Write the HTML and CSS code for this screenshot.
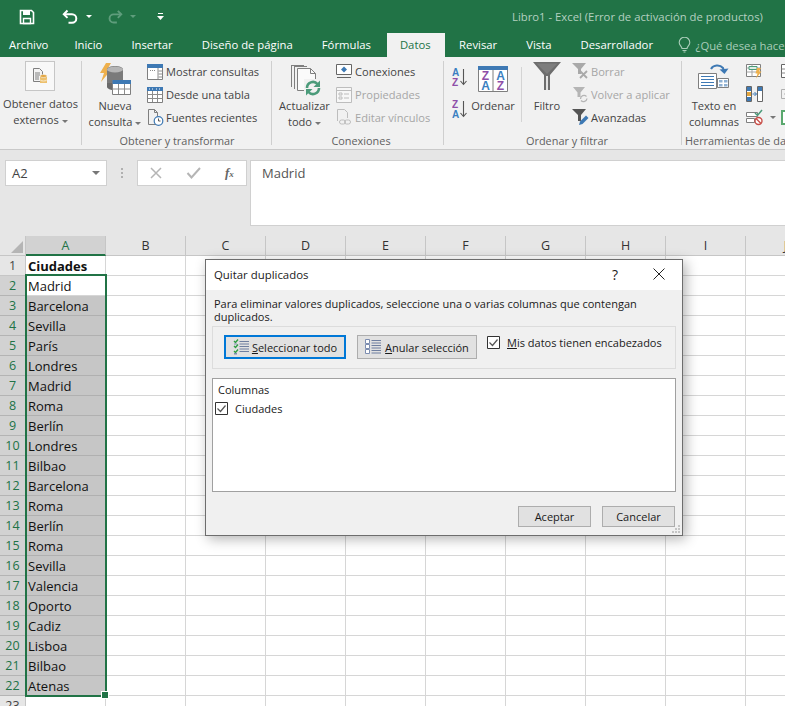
FILE: index.html
```html
<!DOCTYPE html>
<html lang="es">
<head>
<meta charset="utf-8">
<title>Libro1 - Excel</title>
<link rel="stylesheet" href="styles.css">
</head>
<body>
<div class="app">
  <header class="titlebar">
    <div class="qat">
      <svg class="qat-save" width="16" height="16" viewBox="0 0 16 16"><path d="M1.500 1.500h11l2 2v11h-13z" fill="none" stroke="#fff" stroke-width="1.600"/><path d="M4 1.500h7v4.500H4z" fill="#fff"/><path d="M4.500 9.500h7v5h-7z" fill="none" stroke="#fff" stroke-width="1.400"/></svg>
      <svg class="qat-undo" width="17" height="16" viewBox="0 0 17 16"><path d="M5.500 1.500L1.800 5.200l3.700 3.700" fill="none" stroke="#fff" stroke-width="2"/><path d="M2 5.200h8a4.300 4.300 0 0 1 0 8.600H6.500" fill="none" stroke="#fff" stroke-width="2"/></svg>
      <span class="qat-caret"></span>
      <svg class="qat-redo" width="16" height="16" viewBox="0 0 17 16"><path d="M11.500 1.500l3.700 3.700-3.700 3.700" fill="none" stroke="#5f9d7c" stroke-width="2"/><path d="M15 5.200H7a4.300 4.300 0 0 0 0 8.600h3.500" fill="none" stroke="#5f9d7c" stroke-width="2"/></svg>
      <span class="qat-caret dim"></span>
      <svg class="qat-more" width="7" height="8" viewBox="0 0 7 8"><path d="M1 .5h5" stroke="#fff"/><path d="M0 3h7L3.500 7z" fill="#fff"/></svg>
    </div>
    <div class="doc-title">Libro1 - Excel (Error de activación de productos)</div>
  </header>

  <nav class="tabs">
    <span class="tab tab-file">Archivo</span>
    <span class="tab">Inicio</span>
    <span class="tab">Insertar</span>
    <span class="tab">Diseño de página</span>
    <span class="tab">Fórmulas</span>
    <span class="tab tab-active">Datos</span>
    <span class="tab">Revisar</span>
    <span class="tab">Vista</span>
    <span class="tab">Desarrollador</span>
    <span class="tell">
      <svg width="13" height="16" viewBox="0 0 13 16"><path d="M4 11.500c0-2-2.800-3-2.800-6a5.300 5.300 0 0 1 10.600 0c0 3-2.800 4-2.800 6zM4.500 13.500h4M5.500 15h2" fill="none" stroke="#a9cdb9" stroke-width="1.100"/></svg>
      ¿Qué desea hacer?
    </span>
  </nav>

  <section class="ribbon">
    <div class="group g1">
      <div class="group-body">
        <div class="large ext">
          <div class="ext-box">
            <svg width="16" height="16" viewBox="0 0 16 16"><path d="M1.500.5h6l3 3v10h-9z" fill="#f4f4f4" stroke="#7f7f7f"/><path d="M3 5h5M3 7h5M3 9h4M3 11h4" stroke="#7f7f7f"/><path d="M8 8h7v7H8z" fill="#edc06d"/><ellipse cx="11.500" cy="8" rx="3.500" ry="1.500" fill="#e3a53e" stroke="#f4f4f4" stroke-width=".6"/><path d="M8 11.500a3.500 1.500 0 0 0 7 0" fill="none" stroke="#f8e9c9"/></svg>
          </div>
          <div class="lbl">Obtener datos</div>
          <div class="lbl">externos<i class="caret"></i></div>
        </div>
      </div>
    </div>

    <div class="group g2">
      <div class="group-body">
        <div class="large w54">
          <svg class="big" width="34" height="34" viewBox="0 0 34 34"><path d="M8 1h5L9 8h4L3 20l3-9H2z" fill="#eeb04c"/><path d="M9 7.500c0-2.200 3.500-3.500 8-3.500s8 1.300 8 3.500V24H9z" fill="#7a7a7a"/><ellipse cx="17" cy="7.500" rx="8" ry="3" fill="#b5b5b5"/><path d="M9 21v4c0 1.500 3 3 6 3v-7z" fill="#6a6a6a"/><path d="M14.500 18.500h18v14h-18z" fill="#fff" stroke="#7f7f7f"/><path d="M14.500 18h18.500v4H14.500z" fill="#3e79b4"/><path d="M14.500 27h18M20.500 22v10M26.500 22v10" stroke="#8c8c8c"/></svg>
          <div class="lbl">Nueva</div>
          <div class="lbl">consulta<i class="caret"></i></div>
        </div>
        <div class="stack">
          <div class="row"><svg width="17" height="17" viewBox="0 0 17 17"><path d="M.5 1.500h15v15H.5z" fill="#fff" stroke="#7f7f7f"/><path d="M0 1h16v4H0z" fill="#3e79b4"/><path d="M11 5v11M11.500 8h4M11.500 11h4M11.500 14h4" stroke="#8c8c8c"/><path d="M7 7.500h1M5 7.500h1M3 7.500h1" stroke="#8c8c8c"/></svg><span>Mostrar consultas</span></div>
          <div class="row"><svg width="17" height="17" viewBox="0 0 17 17"><path d="M.5 1.500h15v15H.5z" fill="#fff" stroke="#7f7f7f"/><path d="M0 1h16v4H0z" fill="#3e79b4"/><path d="M2 3h1M5 3h1M9 3h1M12 3h1" stroke="#fff"/><path d="M.5 8.500h15M.5 12.500h15M5.500 5v11M10.500 5v11" stroke="#8c8c8c"/></svg><span>Desde una tabla</span></div>
          <div class="row"><svg width="17" height="17" viewBox="0 0 17 17"><path d="M9 15.500H1.500V.5h6l3 3v4" fill="none" stroke="#7f7f7f"/><path d="M7.500.5v3h3" fill="none" stroke="#7f7f7f"/><circle cx="11.500" cy="12" r="4.300" fill="#fff" stroke="#3e79b4" stroke-width="1.200"/><path d="M11.500 9.500V12h2" fill="none" stroke="#555"/></svg><span>Fuentes recientes</span></div>
        </div>
      </div>
      <div class="group-label">Obtener y transformar</div>
    </div>

    <div class="group g3">
      <div class="group-body">
        <div class="large w53">
          <svg class="big" width="34" height="34" viewBox="0 0 34 34"><path d="M3.500 3v22M6.500 4v23" fill="none" stroke="#7f7f7f"/><path d="M3 3.500h13M6 4.500h13" stroke="#7f7f7f"/><path d="M9.500 6.500h13l5 5v17h-18z" fill="#fafafa" stroke="#7f7f7f"/><path d="M22.500 6.500v5h5" fill="none" stroke="#7f7f7f"/><path d="M16 17h17v17H16z" fill="#f1f1f1"/><path d="M19 26a6 6 0 0 1 10.500-4" fill="none" stroke="#4b9b7a" stroke-width="2.600"/><path d="M32 18.500v6.500h-6.500z" fill="#4b9b7a"/><path d="M31 26a6 6 0 0 1-10.500 4" fill="none" stroke="#4b9b7a" stroke-width="2.600"/><path d="M18 33.500V27h6.500z" fill="#4b9b7a"/></svg>
          <div class="lbl">Actualizar</div>
          <div class="lbl">todo<i class="caret"></i></div>
        </div>
        <div class="stack">
          <div class="row"><svg width="17" height="17" viewBox="0 0 17 17"><path d="M.5 1.500h15v10H.5z" fill="#fff" stroke="#666"/><path d="M1 14.500h14" stroke="#666"/><path d="M8 3.500l3 3-3 3-3-3z" fill="#3e79b4"/></svg><span>Conexiones</span></div>
          <div class="row off"><svg width="17" height="17" viewBox="0 0 17 17"><path d="M.5 1.500h15v15H.5z" fill="#f7f7f7" stroke="#bdbdbd"/><path d="M.5 4.500h15" stroke="#bdbdbd"/><path d="M3 7h3v2H3zM3 11h3v2H3z" fill="none" stroke="#bdbdbd"/><path d="M8 8h5M8 12h5" stroke="#bdbdbd"/></svg><span>Propiedades</span></div>
          <div class="row off"><svg width="17" height="17" viewBox="0 0 17 17"><path d="M1.500 12V.5h7l3 3V9" fill="none" stroke="#bdbdbd"/><rect x="3.500" y="11" width="6" height="4" rx="2" fill="none" stroke="#bdbdbd"/><rect x="8.500" y="11" width="6" height="4" rx="2" fill="none" stroke="#bdbdbd"/></svg><span>Editar vínculos</span></div>
        </div>
      </div>
      <div class="group-label">Conexiones</div>
    </div>

    <div class="group g4">
      <div class="group-body">
        <div class="sorts">
          <svg width="16" height="22" viewBox="0 0 16 22"><text x="0" y="9" class="sl blue">A</text><text x="0" y="19" class="sl purple">Z</text><path d="M11.500 2v15M8.500 14l3 3.500 3-3.500" fill="none" stroke="#555" stroke-width="1.100"/></svg>
          <svg width="16" height="22" viewBox="0 0 16 22"><text x="0" y="9" class="sl purple">Z</text><text x="0" y="19" class="sl blue">A</text><path d="M11.500 2v15M8.500 14l3 3.500 3-3.500" fill="none" stroke="#555" stroke-width="1.100"/></svg>
        </div>
        <div class="large w46">
          <svg class="big sortbox" width="30" height="26" viewBox="0 0 30 26"><path d="M.5.500h29v25H.5z" fill="#fff" stroke="#7f7f7f"/><path d="M0 0h30v4H0z" fill="#3e79b4"/><path d="M15 4v22" stroke="#7f7f7f"/><text x="7.500" y="14" class="zl purple">Z</text><text x="22.500" y="14" class="zl blue">A</text><text x="7.500" y="24" class="zl blue">A</text><text x="22.500" y="24" class="zl purple">Z</text></svg>
          <div class="lbl">Ordenar</div>
        </div>
        <div class="vsep"></div>
        <div class="large w40">
          <svg class="big" width="28" height="28" viewBox="0 0 28 28"><path d="M0 0h28L17 13v15h-6V13z" fill="#6d6d6d"/><path d="M13 14h2v14h-2z" fill="#e2e2e2"/><path d="M3.500 1.500h21L14 12z" fill="#7d7d7d"/></svg>
          <div class="lbl">Filtro</div>
        </div>
        <div class="stack">
          <div class="row off"><svg width="17" height="17" viewBox="0 0 17 17"><path d="M0 0h14L9 6v5H6V6z" fill="#a9a9a9"/><path d="M8 8l7 7M15 8l-7 7" stroke="#a9a9a9" stroke-width="1.800"/></svg><span>Borrar</span></div>
          <div class="row off"><svg width="17" height="17" viewBox="0 0 17 17"><path d="M1 1h12L8.500 6.500V11h-3V6.500z" fill="#b5b5b5"/><path d="M8.500 13a3.500 3.500 0 0 1 6-2.500M15 12.500a3.500 3.500 0 0 1-6 2" fill="none" stroke="#b5b5b5" stroke-width="1.300"/></svg><span>Volver a aplicar</span></div>
          <div class="row"><svg width="17" height="17" viewBox="0 0 17 17"><path d="M0 0h14L9 6v6H6V6z" fill="#555"/><path d="M7 16l1-3.500 6-6 2.500 2.500-6 6z" fill="#3e79b4"/></svg><span>Avanzadas</span></div>
        </div>
      </div>
      <div class="group-label">Ordenar y filtrar</div>
    </div>

    <div class="group g5">
      <div class="group-body">
        <div class="large w56">
          <svg class="big" width="32" height="32" viewBox="0 0 32 32"><path d="M.5 11.500h18v15H.5z" fill="#fff" stroke="#7f7f7f"/><path d="M3 14.500h13M3 17.500h13M3 20.500h13M3 23.500h13" stroke="#3e79b4"/><path d="M19.500 16.500h11v9h-11z" fill="#fff" stroke="#7f7f7f"/><path d="M21 18h3.500v2.500H21zM26 18h3.500v2.500H26zM21 22h3.500v2.500H21zM26 22h3.500v2.500H26z" fill="#8fb1d3"/><path d="M13 7a7 6 0 0 1 12-1l1 3" fill="none" stroke="#3e79b4" stroke-width="2"/><path d="M21.500 7.500l5 4.500 4-5.500z" fill="#3e79b4"/></svg>
          <div class="lbl">Texto en</div>
          <div class="lbl">columnas</div>
        </div>
        <div class="stack tools">
          <div class="row"><svg width="17" height="17" viewBox="0 0 17 17"><path d="M.5 1.500h14v12H.5z" fill="#fff" stroke="#7f7f7f"/><path d="M.5 5h14M.5 9h14M6 1.500v12" stroke="#a5a5a5"/><path d="M3 3.500h8v3H3z" fill="#dfeee5" stroke="#4b9b7a"/><path d="M11 5h4l-2 3.500h2.500L10 15.500l1.500-5H9.500z" fill="#eeb04c"/></svg></div>
          <div class="row"><svg width="17" height="17" viewBox="0 0 17 17"><path d="M.5.500h5v15h-5zM11.500.500h5v15h-5z" fill="#fff" stroke="#666"/><path d="M1 1h4v4H1zM12 1h4v4h-4z" fill="#3e79b4"/><path d="M1 6h4v4H1z" fill="#e3a53e"/><path d="M1 11h4v4H1z" fill="#3e79b4"/><path d="M6.500 8h4M8.500 6l2 2-2 2" fill="none" stroke="#3e79b4"/></svg></div>
          <div class="row"><svg width="17" height="17" viewBox="0 0 17 17"><path d="M.5 3.500h11v4H.5zM.5 9.500h8v4H.5z" fill="#fff" stroke="#7f7f7f"/><path d="M9 4l2.500 2.500L16 1" fill="none" stroke="#4b9b7a" stroke-width="1.500"/><circle cx="12.500" cy="12" r="3.500" fill="#fff" stroke="#c8504a" stroke-width="1.400"/><path d="M10 9.500l5 5" stroke="#c8504a" stroke-width="1.400"/></svg><i class="caret tool-caret"></i></div>
        </div>
        <div class="stack tools2">
          <div class="row"><svg width="17" height="17" viewBox="0 0 17 17"><path d="M.5 1.500h14v13H.5z" fill="#fff" stroke="#666"/><path d="M.5 6h14M.5 10h14M6 1.500v13" stroke="#888"/></svg></div>
          <div class="row"><svg width="17" height="17" viewBox="0 0 17 17"><path d="M.5 3.500h14v9H.5z" fill="#f2f2f2" stroke="#b0b0b0"/><path d="M3 8h8" stroke="#b0b0b0"/></svg></div>
          <div class="row"><svg width="17" height="17" viewBox="0 0 17 17"><path d="M1 2h5v13H1z" fill="#fff" stroke="#5aa86e" stroke-width="2"/></svg></div>
        </div>
      </div>
      <div class="group-label">Herramientas de datos</div>
    </div>
  </section>

  <section class="fbar">
    <div class="namebox"><span>A2</span><i class="nb-caret"></i></div>
    <div class="dots"><b></b><b></b><b></b></div>
    <div class="fbtns">
      <svg width="14" height="14" viewBox="0 0 14 14"><path d="M2 2l10 10M12 2L2 12" stroke="#b5b5b5" stroke-width="1.500"/></svg>
      <svg width="15" height="14" viewBox="0 0 15 14"><path d="M1.500 7l4 4.500L14 2" fill="none" stroke="#b5b5b5" stroke-width="2"/></svg>
      <span class="fx">f<small>x</small></span>
    </div>
    <div class="finput">Madrid</div>
  </section>

  <section class="sheet">
    <div class="grid" id="grid"></div>
    <div class="selection"><i class="handle"></i></div>

    <div class="dialog">
      <div class="dlg-title">
        <span class="dlg-name">Quitar duplicados</span>
        <span class="dlg-help">?</span>
        <svg class="dlg-close" width="12" height="12" viewBox="0 0 12 12"><path d="M.5.500l11 11M11.500.500l-11 11" stroke="#222" stroke-width="1"/></svg>
      </div>
      <div class="dlg-body">
        <p class="dlg-desc">Para eliminar valores duplicados, seleccione una o varias columnas que contengan duplicados.</p>
        <div class="dlg-tools">
          <button class="btn btn-sel">
            <svg width="17" height="16" viewBox="0 0 17 16"><path d="M1 2l1.500 1.500L5 .5M1 7l1.500 1.500L5 5.500M1 12l1.500 1.500L5 10.500" fill="none" stroke="#2f9e44" stroke-width="1.400"/><path d="M6.500 2.500H16M6.500 5H16M6.500 7.500H16M6.500 10H16M6.500 12.500H16" stroke="#6f7fa0"/><path d="M1 4.500h3v1H1zM1 14h3v1.500H1z" fill="#7c8db0"/></svg>
            <span><u>S</u>eleccionar todo</span>
          </button>
          <button class="btn btn-clear">
            <svg width="17" height="16" viewBox="0 0 17 16"><path d="M.5.500h4v4h-4zM.5 5.500h4v4h-4zM.5 10.500h4v4h-4z" fill="#fff" stroke="#7c8db0"/><path d="M6.500 1.500H16M6.500 4H16M6.500 6.500H16M6.500 9H16M6.500 11.500H16M6.500 14H16" stroke="#6f7fa0"/></svg>
            <span><u>A</u>nular selección</span>
          </button>
          <label class="chk-line">
            <svg class="chk" width="13" height="13" viewBox="0 0 13 13"><path d="M.5.500h12v12H.5z" fill="#fff" stroke="#333"/><path d="M2.500 6.500l3 3 5-6" fill="none" stroke="#555" stroke-width="1.200"/></svg>
            <span><u>M</u>is datos tienen encabezados</span>
          </label>
        </div>
        <div class="dlg-cols">
          <div class="cols-head">Columnas</div>
          <label class="chk-line col-item">
            <svg class="chk" width="13" height="13" viewBox="0 0 13 13"><path d="M.5.500h12v12H.5z" fill="#fff" stroke="#333"/><path d="M2.500 6.500l3 3 5-6" fill="none" stroke="#555" stroke-width="1.200"/></svg>
            <span>Ciudades</span>
          </label>
        </div>
        <div class="dlg-actions">
          <button class="btn btn-act">Aceptar</button>
          <button class="btn btn-act">Cancelar</button>
        </div>
      </div>
      <svg class="grip" width="9" height="9" viewBox="0 0 9 9"><path d="M6 0h2v2H6zM3 3h2v2H3zM6 3h2v2H6zM0 6h2v2H0zM3 6h2v2H3zM6 6h2v2H6z" fill="#c4c4c4"/></svg>
    </div>
  </section>
</div>
<script src="grid.js"></script>
</body>
</html>
```

FILE: grid.js
```js
var cities = ["Ciudades","Madrid","Barcelona","Sevilla","París","Londres","Madrid","Roma","Berlín","Londres","Bilbao","Barcelona","Roma","Berlín","Roma","Sevilla","Valencia","Oporto","Cadiz","Lisboa","Bilbao","Atenas"];
var cols = "ABCDEFGHIJ".split("");
var html = '<div class="corner"><i></i></div>';
cols.forEach(function (c, i) {
  html += '<div class="colh' + (i === 0 ? ' on' : '') + '">' + c + '</div>';
});
for (var r = 1; r <= 23; r++) {
  var sel = r >= 2 && r <= 22;
  html += '<div class="rowh' + (sel ? ' on' : '') + '">' + r + '</div>';
  cols.forEach(function (c, i) {
    var cls = 'cell';
    var text = '';
    if (i === 0) {
      text = cities[r - 1] || '';
      if (r === 1) cls += ' head';
      if (r > 2 && r <= 22) cls += ' picked';
    }
    html += '<div class="' + cls + '">' + text + '</div>';
  });
}
document.getElementById('grid').innerHTML = html;
```

FILE: styles.css
```css
* { box-sizing: border-box; }
html, body { margin: 0; padding: 0; height: 100%; overflow: hidden; }
body { font-family: "Open Sans", "Noto Sans", sans-serif; font-size: 12px; color: #444; background: #e6e6e6; }
svg { display: block; flex: none; }
.app { width: 785px; height: 706px; overflow: hidden; display: flex; flex-direction: column; }

.titlebar { height: 33px; background: #217346; display: flex; align-items: center; flex: none; }
.qat { display: flex; align-items: center; width: 512px; padding-left: 19px; flex: none; }
.qat-undo { margin-left: 27px; }
.qat-caret { width: 0; height: 0; border: 3px solid transparent; border-top: 3px solid #fff; border-bottom: 0; margin-left: 7px; }
.qat-caret.dim { border-top-color: #5f9d7c; }
.qat-redo { margin-left: 15px; }
.qat-more { margin-left: 21px; }
.doc-title { color: #b4d0c0; font-size: 11.300px; white-space: nowrap; }

.tabs { height: 24px; background: #217346; display: flex; align-items: stretch; flex: none; color: #fff; font-size: 11.300px; white-space: nowrap; overflow: hidden; }
.tab { padding: 0 14.500px; line-height: 23px; flex: none; }
.tab-file { padding: 0 11.500px 0 9px; }
.tab-active { background: #f1f1f1; color: #217346; margin: 0 0 0 1.500px; padding: 0 14px 0 13px; }
.tell { display: flex; align-items: center; gap: 5px; color: #a9cdb9; margin-left: 10px; flex: none; }

.ribbon { height: 93px; background: #f1f1f1; border-bottom: 1px solid #c9c9c9; display: flex; padding-top: 3px; flex: none; overflow: hidden; font-size: 11.100px; color: #444; white-space: nowrap; }
.group { display: flex; flex-direction: column; height: 88px; background: linear-gradient(#cfcfcf, #cfcfcf) right top 1px / 1px 84px no-repeat; flex: none; }
.g1 { width: 82px; }
.g2 { width: 190px; padding-left: 6px; }
.g3 { width: 172px; padding-left: 6px; }
.g4 { width: 238px; padding-left: 8px; }
.g5 { width: 130px; padding-left: 4px; background: none; }
.group-body { height: 73px; flex: none; display: flex; }
.group-label { height: 15px; line-height: 16px; text-align: center; color: #5f5f5f; font-size: 10.900px; flex: none; }
.g2 .group-label { margin-left: -6px; }
.g5 .group-label { text-align: left; margin-left: -1px; }
.large { display: flex; flex-direction: column; align-items: center; padding-top: 38px; position: relative; flex: none; }
.large .big { position: absolute; top: 2px; left: 50%; transform: translateX(-50%); }
.lbl { height: 16px; line-height: 16px; }
.w54 { width: 54px; }
.w53 { width: 53px; }
.w46 { width: 46px; margin-left: 2px; }
.w40 { width: 40px; }
.w56 { width: 56px; }
.big.sortbox { top: 6px; }
.ext { width: 81px; padding-top: 36px; }
.ext-box { position: absolute; top: 1px; left: 25px; width: 30px; height: 30px; background: #f8f8f8; border: 1px solid #c6c6c6; display: flex; align-items: center; justify-content: center; }
.caret { display: inline-block; width: 0; height: 0; border: 3px solid transparent; border-top: 3px solid #777; border-bottom: 0; margin-left: 3px; vertical-align: middle; }
.stack { display: flex; flex-direction: column; margin-left: 5px; flex: none; }
.row { height: 23px; display: flex; align-items: center; gap: 2px; }
.row.off { color: #a6a6a6; }
.sorts { display: flex; flex-direction: column; gap: 10px; padding-top: 7px; width: 16px; flex: none; }
.sl { font: bold 10px "Liberation Sans", sans-serif; }
.zl { font: bold 12px "Liberation Sans", sans-serif; text-anchor: middle; }
.blue { fill: #3a7fc1; }
.purple { fill: #8e4ea8; }
.vsep { width: 1px; height: 55px; background: #d4d4d4; margin: 7px 5px 0 5px; flex: none; }
.tools { margin-left: 4px; width: 35px; }
.tool-caret { margin-left: 5px; }
.tools2 { margin-left: 0; }

.fbar { height: 86px; background: #e6e6e6; display: flex; align-items: flex-start; padding: 10px 0 0 5px; flex: none; }
.namebox { width: 102px; height: 26px; background: #fff; border: 1px solid #d0d0d0; display: flex; align-items: center; justify-content: space-between; padding: 0 6px; font-size: 13px; color: #444; flex: none; }
.nb-caret { width: 0; height: 0; border: 4px solid transparent; border-top: 4px solid #777; border-bottom: 0; }
.dots { width: 30px; height: 26px; display: flex; flex-direction: column; align-items: center; justify-content: center; gap: 2px; flex: none; }
.dots b { width: 2px; height: 2px; background: #b0b0b0; }
.fbtns { width: 110px; height: 26px; background: #fff; border: 1px solid #d0d0d0; display: flex; align-items: center; padding-left: 11px; gap: 23px; flex: none; }
.fx { font: italic bold 13px "Liberation Serif", serif; color: #666; margin-left: 1px; }
.fx small { font-size: 9px; }
.finput { width: 540px; height: 66px; margin-left: 3px; background: #fff; border: 1px solid #d0d0d0; padding: 3px 11px; font-size: 13px; color: #555; flex: none; }

.sheet { position: relative; flex: 1; background: #fff; overflow: hidden; }
.grid { display: grid; grid-template-columns: 26px repeat(10, 80px); grid-auto-rows: 20px; font-size: 13px; color: #000; }
.corner { background: #e6e6e6; border-right: 1px solid #c6c6c6; border-bottom: 1px solid #c6c6c6; position: relative; }
.corner i { position: absolute; right: 2px; bottom: 2px; width: 0; height: 0; border-left: 12px solid transparent; border-bottom: 12px solid #b5b5b5; }
.colh { background: #e6e6e6; border-right: 1px solid #c6c6c6; border-bottom: 1px solid #c6c6c6; text-align: center; line-height: 19px; color: #333; font-size: 12.500px; }
.colh.on { background: #d2d2d2; color: #217346; border-bottom: 2px solid #217346; }
.rowh { background: #e6e6e6; border-right: 1px solid #c6c6c6; border-bottom: 1px solid #c6c6c6; text-align: center; line-height: 20px; color: #444; font-size: 12.500px; }
.rowh.on { background: #d2d2d2; color: #217346; border-bottom-color: #b4b4b4; }
.cell { border-right: 1px solid #d6d6d6; border-bottom: 1px solid #d6d6d6; padding-left: 2px; line-height: 20px; white-space: nowrap; color: #111; }
.cell.head { font-weight: 700; }
.cell.picked { background: #c6c6c6; border-right-color: #b0b0b0; border-bottom-color: #b0b0b0; }
.selection { position: absolute; left: 25px; top: 38px; width: 82px; height: 423px; border: 2px solid #217346; pointer-events: none; }
.handle { position: absolute; right: -3px; bottom: -3px; width: 6px; height: 6px; background: #217346; outline: 1px solid #fff; }

.dialog { position: absolute; left: 205px; top: 23px; width: 478px; height: 277px; background: #f0f0f0; border: 1px solid #6d6d6d; box-shadow: 3px 3px 12px rgba(0,0,0,.3); display: flex; flex-direction: column; color: #1a1a1a; font-size: 11px; }
.dlg-title { height: 30px; background: #fff; display: flex; align-items: center; padding: 0 0 2px 8px; flex: none; }
.dlg-name { font-size: 11.400px; flex: 1; }
.dlg-help { font-size: 14px; width: 41px; }
.dlg-close { margin-right: 17px; }
.dlg-body { flex: 1; padding: 7px 6px 0 6px; display: flex; flex-direction: column; }
.dlg-desc { margin: 0 0 3px 2px; line-height: 13px; height: 26px; width: 440px; }
.dlg-tools { height: 43px; border: 1px solid #dcdcdc; display: flex; align-items: flex-start; padding: 8px 0 0 11px; }
.btn { font: inherit; color: inherit; background: #e1e1e1; border: 1px solid #adadad; display: flex; align-items: center; justify-content: center; padding: 0; }
.btn-sel { width: 122px; height: 24px; border: 2px solid #0078d7; gap: 2px; }
.btn-clear { width: 120px; height: 24px; margin-left: 11px; gap: 3px; }
.chk-line { display: flex; align-items: center; gap: 7px; }
.dlg-tools .chk-line { margin-left: 10px; }
.dlg-cols { height: 114px; margin-top: 9px; background: #fff; border: 1px solid #a0a0a0; padding: 4px 2px; }
.cols-head { margin-left: 3px; line-height: 14px; }
.col-item { margin-top: 4px; }
.dlg-actions { display: flex; justify-content: flex-end; gap: 11px; margin-top: 14px; margin-right: 1px; }
.btn-act { width: 73px; height: 21px; }
.grip { position: absolute; right: 1px; bottom: 1px; }
```
